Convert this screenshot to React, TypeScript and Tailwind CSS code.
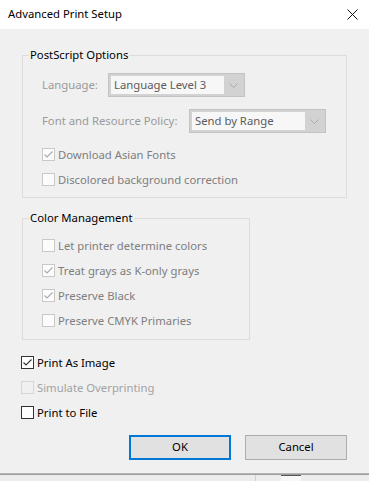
import { ReactNode } from "react";

const font = { fontFamily: '"Noto Sans", "Segoe UI", sans-serif' };

function CheckBox({
  label,
  checked = false,
  disabled = false,
  dim = false,
}: {
  label: string;
  checked?: boolean;
  disabled?: boolean;
  dim?: boolean;
}) {
  const box = disabled
    ? dim
      ? "border-[#d6d6d6] bg-[#f0f0f0]"
      : "border-[#c9c9c9] bg-[#fcfcfc]"
    : "border-[#333333] bg-white";
  const stroke = disabled ? "#a9a9a9" : "#333333";
  return (
    <div className="flex h-[25px] items-center">
      <div className={`flex h-[13px] w-[13px] shrink-0 items-center justify-center border ${box}`}>
        {checked && (
          <svg width="11" height="11" viewBox="0 0 11 11">
            <path d="M1.5 5.5 L4 8 L9.5 2.5" fill="none" stroke={stroke} strokeWidth="1.1" />
          </svg>
        )}
      </div>
      <span
        className={`ml-[3px] text-[11.3px] leading-[16px] ${
          disabled ? (dim ? "text-[#a3a3a3]" : "text-[#7e7e7e]") : "text-black"
        }`}
      >
        {label}
      </span>
    </div>
  );
}

function Select({ value, width }: { value: string; width: string }) {
  return (
    <div className={`flex h-[24px] border border-[#c3c3c3] bg-[#d2d2d2] p-[2px] ${width}`}>
      <div className="flex flex-1 items-center bg-[#f7f7f7] pl-[3px] text-[11.3px] text-[#5c5c5c]">
        {value}
      </div>
      <div className="flex w-[18px] items-center justify-center">
        <svg width="9" height="5" viewBox="0 0 9 5">
          <path d="M0.5 0.5 L4.5 4.5 L8.5 0.5" fill="none" stroke="#ababab" strokeWidth="1" />
        </svg>
      </div>
    </div>
  );
}

function Group({ title, width, children }: { title: string; width: string; children: ReactNode }) {
  return (
    <fieldset className={`border border-[#dcdcdc] px-[6px] ${width}`}>
      <legend className="px-[1px] text-[11.3px] leading-[16px] text-black">{title}</legend>
      <div className="pl-[13px]">{children}</div>
    </fieldset>
  );
}

export default function App() {
  return (
    <div className="flex h-[481px] w-[369px] flex-col bg-white" style={font}>
      <div className="flex h-[29px] shrink-0 items-center justify-between pl-[8px] pr-[11px]">
        <span className="text-[11.3px] text-black">Advanced Print Setup</span>
        <svg width="11" height="11" viewBox="0 0 11 11">
          <path d="M0.5 0.5 L10.5 10.5 M10.5 0.5 L0.5 10.5" stroke="#111" strokeWidth="1" />
        </svg>
      </div>

      <div className="flex flex-1 flex-col bg-[#f0f0f0] pl-[22px] pr-[22px] pt-[18px]">
        <Group title="PostScript Options" width="w-[325px]">
          <div className="mt-[10px] flex items-center">
            <span className="w-[66px] text-[11.3px] text-[#9a9a9a]">Language:</span>
            <Select value="Language Level 3" width="w-[137px]" />
          </div>
          <div className="mt-[12px] flex items-center">
            <span className="w-[147px] text-[11.3px] text-[#9a9a9a]">Font and Resource Policy:</span>
            <Select value="Send by Range" width="w-[137px]" />
          </div>
          <div className="mt-[9px] pb-[5px]">
            <CheckBox label="Download Asian Fonts" checked disabled />
            <CheckBox label="Discolored background correction" disabled />
          </div>
        </Group>

        <div className="mt-[12px]">
          <Group title="Color Management" width="w-[228px]">
            <div className="mt-[7px] pb-[6px]">
              <CheckBox label="Let printer determine colors" disabled />
              <CheckBox label="Treat grays as K-only grays" checked disabled />
              <CheckBox label="Preserve Black" checked disabled />
              <CheckBox label="Preserve CMYK Primaries" disabled />
            </div>
          </Group>
        </div>

        <div className="-ml-[1px] mt-[10px]">
          <CheckBox label="Print As Image" checked />
          <CheckBox label="Simulate Overprinting" disabled dim />
          <CheckBox label="Print to File" />
        </div>

        <div className="mt-[10px] flex justify-end gap-[14px]">
          <button className="h-[25px] w-[102px] border-2 border-[#0078d7] bg-[#e1e1e1] text-[11.3px] text-black">
            OK
          </button>
          <button className="h-[25px] w-[102px] border border-[#adadad] bg-[#e1e1e1] text-[11.3px] text-black">
            Cancel
          </button>
        </div>
      </div>

      <div className="h-[2px] shrink-0 bg-gradient-to-b from-[#c4c4c4] to-[#8f8f8f]" />
      <div className="flex h-[6px] shrink-0 items-start bg-[#ececec]">
        <div className="ml-[255px] h-full w-px bg-[#d0d0d0]" />
        <div className="ml-[25px] h-full w-[20px] border-t border-[#555] bg-[#f8f8f8]" />
      </div>
    </div>
  );
}
